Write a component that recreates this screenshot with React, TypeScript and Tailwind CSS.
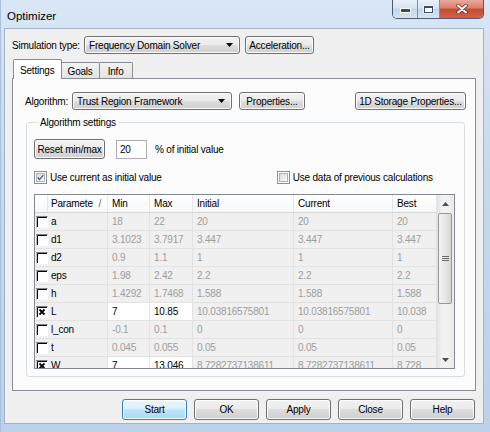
import React from 'react'

type Row = {
  name: string
  min: string
  max: string
  init: string
  cur: string
  best: string
  on?: boolean
}

const rows: Row[] = [
  { name: 'a', min: '18', max: '22', init: '20', cur: '20', best: '20' },
  { name: 'd1', min: '3.1023', max: '3.7917', init: '3.447', cur: '3.447', best: '3.447' },
  { name: 'd2', min: '0.9', max: '1.1', init: '1', cur: '1', best: '1' },
  { name: 'eps', min: '1.98', max: '2.42', init: '2.2', cur: '2.2', best: '2.2' },
  { name: 'h', min: '1.4292', max: '1.7468', init: '1.588', cur: '1.588', best: '1.588' },
  { name: 'L', min: '7', max: '10.85', init: '10.03816575801', cur: '10.03816575801', best: '10.038', on: true },
  { name: 'l_con', min: '-0.1', max: '0.1', init: '0', cur: '0', best: '0' },
  { name: 't', min: '0.045', max: '0.055', init: '0.05', cur: '0.05', best: '0.05' },
  { name: 'W', min: '7', max: '13.046', init: '8.7282737138611', cur: '8.7282737138611', best: '8.728', on: true },
]

const btnBg = 'border-[#707070] bg-[linear-gradient(#f2f2f2,#ebebeb_50%,#dddddd_50%,#cfcfcf)]'

function Button({ label, className = '', primary = false }: { label: string; className?: string; primary?: boolean }) {
  return (
    <div
      className={`flex items-center justify-center rounded-[3px] border shadow-[inset_0_0_0_1px_#fcfcfc] ${
        primary ? 'border-[#3c7fb1] bg-[linear-gradient(#eaf6fd,#d9f0fc_50%,#bee6fd_50%,#a7d9f5)]' : btnBg
      } ${className}`}
    >
      {label}
    </div>
  )
}

function Combo({ value, className = '' }: { value: string; className?: string }) {
  return (
    <div className={`flex items-center justify-between rounded-[3px] border shadow-[inset_0_0_0_1px_#fcfcfc] pl-[4px] pr-[6px] ${btnBg} ${className}`}>
      <span>{value}</span>
      <svg width="7" height="4" viewBox="0 0 7 4">
        <path d="M0 0h7L3.5 4z" fill="#000" />
      </svg>
    </div>
  )
}

// windows 7 style checkbox
function Check({ on }: { on: boolean }) {
  return (
    <div className="w-[13px] h-[13px] border border-[#8e8f8f] bg-white p-[1px]">
      <div className="w-full h-full border border-[#aeb3b9] bg-[linear-gradient(135deg,#dcdcdc,#fbfbfb)] flex items-center justify-center">
        {on && (
          <svg width="9" height="9" viewBox="0 0 9 9">
            <path d="M1 4.5l2.3 2.5L8 1.5" fill="none" stroke="#4a5f97" strokeWidth="1.8" />
          </svg>
        )}
      </div>
    </div>
  )
}

// classic sunken checkbox used in the grid
function GridCheck({ on }: { on: boolean }) {
  return (
    <svg width="12" height="12" viewBox="0 0 12 12">
      <rect x="0" y="0" width="12" height="12" fill="#fff" />
      <path d="M0 11.5V0.5H11.5" fill="none" stroke="#808080" />
      <path d="M1.5 11V1.5H11" fill="none" stroke="#000" />
      {on && <path d="M3.5 3.5l5 5M8.5 3.5l-5 5" stroke="#000" strokeWidth="1.8" />}
    </svg>
  )
}

const widths = ['w-[60px]', 'w-[42px]', 'w-[43px]', 'w-[101px]', 'w-[99px]', 'w-[44px]']

function Table() {
  const heads = ['Min', 'Max', 'Initial', 'Current', 'Best']
  return (
    <div className="flex h-[175px] border border-[#828790] bg-[#f0f0f0] overflow-hidden">
      <div className="flex flex-col">
        <div className="flex h-[18px] shrink-0 bg-[linear-gradient(#ffffff,#f7f8fa)] border-b border-[#d5d5d5]">
          <div className="w-[13px] border-r border-[#e3e8ee]" />
          <div className="w-[60px] flex items-center justify-between pl-[3px] pr-[6px] border-r border-[#e3e8ee]">
            <span>Paramete</span>
            <span className="text-[#6d6d6d]">/</span>
          </div>
          {heads.map((h, i) => (
            <div key={h} className={`${widths[i + 1]} flex items-center pl-[4px] border-r border-[#e3e8ee]`}>
              {h}
            </div>
          ))}
        </div>
        {rows.map(r => {
          const cells = [r.min, r.max, r.init, r.cur, r.best]
          return (
            <div key={r.name} className="flex h-[18px] shrink-0">
              <div className="w-[13px] flex items-center justify-end border-b border-[#e2e2e2]">
                <GridCheck on={!!r.on} />
              </div>
              <div className="w-[60px] flex items-center pl-[3px] border-r border-b border-[#e2e2e2]">{r.name}</div>
              {cells.map((c, i) => {
                const editable = r.on && i < 2
                return (
                  <div
                    key={i}
                    className={`${widths[i + 1]} flex items-center pl-[4px] border-r border-b border-[#e2e2e2] ${
                      editable ? 'bg-white text-black' : 'text-[#9d9d9d]'
                    }`}
                  >
                    {c}
                  </div>
                )
              })}
            </div>
          )
        })}
      </div>
      <div className="w-[16px] flex flex-col bg-[linear-gradient(90deg,#e3e3e3,#f2f2f2_30%,#f2f2f2_70%,#e8e8e8)]">
        <div className="h-[18px] flex items-center justify-center">
          <svg width="7" height="4" viewBox="0 0 7 4">
            <path d="M0 4L3.5 0L7 4z" fill="#4d4d4d" />
          </svg>
        </div>
        <div className="mx-[1px] h-[91px] rounded-[2px] border border-[#979797] bg-[linear-gradient(90deg,#f3f3f3,#e8e8e8_50%,#d6d6d6)] flex items-center justify-center">
          <svg width="7" height="7" viewBox="0 0 7 7">
            <path d="M0 1.5h7M0 3.5h7M0 5.5h7" stroke="#6b6b6b" strokeWidth="1" />
          </svg>
        </div>
        <div className="flex-1" />
        <div className="h-[17px] flex items-center justify-center">
          <svg width="7" height="4" viewBox="0 0 7 4">
            <path d="M0 0h7L3.5 4z" fill="#4d4d4d" />
          </svg>
        </div>
      </div>
    </div>
  )
}

function CaptionButtons() {
  return (
    <div className="flex h-[19px] rounded-b-[5px] border border-t-0 border-[#4c5d7a] overflow-hidden">
      <div className="w-[25px] flex items-center justify-center pt-[3px] border-r border-[#7d8fab] bg-[linear-gradient(#e8eff8,#d7e3f1_45%,#c3d5ea_50%,#d6e4f3)]">
        <svg width="11" height="5" viewBox="0 0 11 5">
          <rect x="0.5" y="0.5" width="10" height="4" fill="#3b4b63" stroke="#fff" />
        </svg>
      </div>
      <div className="w-[22px] flex items-center justify-center border-r border-[#7d8fab] bg-[linear-gradient(#e8eff8,#d7e3f1_45%,#c3d5ea_50%,#d6e4f3)]">
        <svg width="11" height="9" viewBox="0 0 11 9">
          <rect x="0.5" y="0.5" width="10" height="8" fill="#fff" />
          <rect x="1.5" y="1.5" width="8" height="6" fill="none" stroke="#3b4b63" />
          <path d="M2 2.5h7" stroke="#3b4b63" />
        </svg>
      </div>
      <div className="w-[43px] flex items-center justify-center bg-[linear-gradient(#e9a99b,#dc7f6b_45%,#c74a30_50%,#d2624a)]">
        <svg width="12" height="10" viewBox="0 0 12 10">
          <path d="M2 1.5l8 7M10 1.5l-8 7" stroke="#5a2a22" strokeWidth="3.4" strokeLinecap="round" />
          <path d="M2 1.5l8 7M10 1.5l-8 7" stroke="#fff" strokeWidth="2" strokeLinecap="round" />
        </svg>
      </div>
    </div>
  )
}

export default function App() {
  return (
    <div className="w-[490px] h-[432px] flex flex-col bg-[linear-gradient(#d9e6f5,#c6d9ee_40%,#bcd1ea)] border-l border-[#a9bfdb] text-[10px] tracking-[-0.2px] text-black font-['Liberation_Sans',Arial,sans-serif] overflow-hidden">
      <div className="h-[28px] shrink-0 flex items-start justify-between pl-[6px] pr-[6px]">
        <span className="mt-[8px] text-[11.5px] tracking-normal">Optimizer</span>
        <CaptionButtons />
      </div>

      <div className="flex-1 ml-[3px] mr-[6px] mb-[8px] bg-[#f0f0f0] border border-[#a3b4c9] flex flex-col">
        <div className="mt-[7px] ml-[7px] flex items-center h-[18px]">
          <span className="w-[72px]">Simulation type:</span>
          <Combo value="Frequency Domain Solver" className="w-[156px] h-[18px]" />
          <Button label="Acceleration..." className="ml-[5px] w-[69px] h-[18px]" />
        </div>

        <div className="mt-[6px] ml-[8px] flex items-end h-[18px]">
          <div className="h-[20px] -mb-px z-10 px-[6px] pt-[3px] bg-white border border-b-0 border-[#898c95] rounded-t-[2px]">Settings</div>
          <div className="h-[16px] px-[6px] pt-[1px] border border-l-0 border-b-0 border-[#898c95] bg-[linear-gradient(#f3f3f3,#e3e3e3)] rounded-tr-[2px]">Goals</div>
          <div className="h-[16px] px-[8px] pt-[1px] border border-l-0 border-b-0 border-[#898c95] bg-[linear-gradient(#f3f3f3,#e3e3e3)] rounded-tr-[2px]">Info</div>
        </div>

        <div className="mx-[7px] h-[313px] border border-[#898c95] bg-[#fcfcfc] flex flex-col">
          <div className="mt-[13px] ml-[12px] mr-[9px] flex items-center h-[18px]">
            <span className="w-[47px]">Algorithm:</span>
            <Combo value="Trust Region Framework" className="w-[160px] h-[18px]" />
            <Button label="Properties..." className="ml-[7px] w-[66px] h-[18px]" />
            <Button label="1D Storage Properties..." className="ml-auto w-[111px] h-[18px]" />
          </div>

          <fieldset className="mt-[5px] ml-[13px] mr-[10px] h-[262px] border border-[#d5dfe5] rounded-[3px] pl-[7px] pr-[9px]">
            <legend className="ml-[4px] px-[2px]">Algorithm settings</legend>
            <div className="mt-[9px] flex items-center h-[20px]">
              <Button label="Reset min/max" className="w-[71px] h-[20px]" />
              <div className="ml-[11px] w-[31px] h-[19px] border border-[#abadb3] bg-white pl-[3px] pt-[1px]">20</div>
              <span className="ml-[8px]">% of initial value</span>
            </div>
            <div className="mt-[12px] flex items-center h-[13px]">
              <Check on />
              <span className="ml-[3px]">Use current as initial value</span>
              <div className="ml-[115px] flex items-center">
                <Check on={false} />
                <span className="ml-[3px]">Use data of previous calculations</span>
              </div>
            </div>
            <div className="mt-[10px]">
              <Table />
            </div>
          </fieldset>
        </div>

        <div className="mt-[8px] mr-[8px] flex justify-end gap-[7px]">
          <Button label="Start" primary className="w-[65px] h-[21px]" />
          <Button label="OK" className="w-[65px] h-[21px]" />
          <Button label="Apply" className="w-[65px] h-[21px]" />
          <Button label="Close" className="w-[65px] h-[21px]" />
          <Button label="Help" className="w-[65px] h-[21px]" />
        </div>
      </div>
    </div>
  )
}
